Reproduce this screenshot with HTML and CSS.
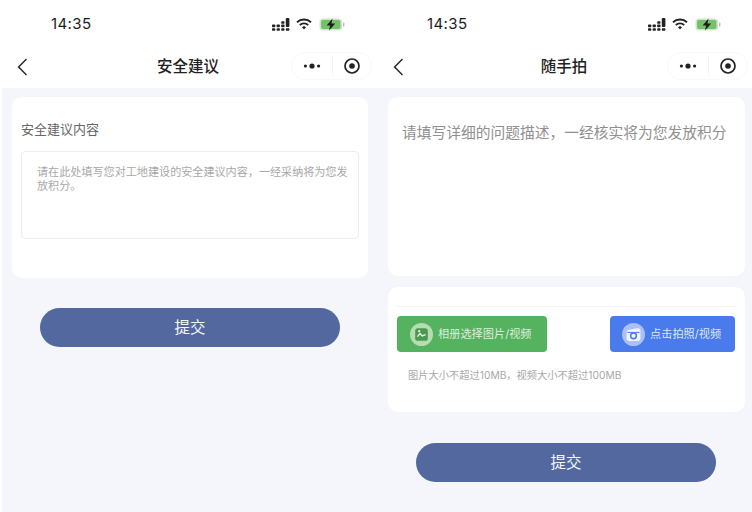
FILE: index.html
```html
<!DOCTYPE html>
<html lang="zh">
<head>
<meta charset="utf-8">
<title>安全建议 / 随手拍</title>
<link rel="stylesheet" href="styles.css">
</head>
<body>
<div class="screens">
  <section class="phone phone-left">
    <div class="statusbar">
      <span class="time">14:35</span>
      <span class="status-icons">
        <svg class="ico-signal" width="19" height="13" viewBox="0 0 19 13"><g fill="#222"><rect x="0" y="6.6" width="3.3" height="2.6" rx=".7"/><rect x="0" y="10.2" width="3.3" height="2.6" rx=".7"/><rect x="4.6" y="6.6" width="3.3" height="2.6" rx=".7"/><rect x="4.6" y="10.2" width="3.3" height="2.6" rx=".7"/><rect x="9.2" y="3.2" width="3.3" height="2.6" rx=".7"/><rect x="9.2" y="6.6" width="3.3" height="2.6" rx=".7"/><rect x="9.2" y="10.2" width="3.3" height="2.6" rx=".7"/><rect x="13.8" y="0" width="3.6" height="9" rx="1"/><rect x="13.8" y="10.2" width="3.6" height="2.6" rx=".7"/></g></svg>
        <svg class="ico-wifi" width="16" height="12" viewBox="0 0 16 12"><path d="M1 4.2C5 .6 11 .6 15 4.2" fill="none" stroke="#222" stroke-width="2"/><path d="M3.8 7C6.2 5 9.8 5 12.2 7" fill="none" stroke="#222" stroke-width="2"/><path d="M6 9.2 8 7.9l2 1.3L8 11.4z" fill="#222"/></svg>
        <svg class="ico-batt" width="26" height="13" viewBox="0 0 26 13"><rect x=".5" y=".5" width="22.5" height="12" rx="3.5" fill="#cfe6ca"/><rect x="2" y="2" width="19.5" height="9" rx="2" fill="#74c06b"/><rect x="24" y="4.5" width="1.4" height="4" rx=".7" fill="#bbb"/><path d="M13.6 .6 7.6 7.4h3.6l-1.2 5 6.2-7h-3.8z" fill="#1c1c1c"/></svg>
      </span>
    </div>
    <div class="navbar">
      <svg class="back" width="11" height="18" viewBox="0 0 11 18"><path d="M9.5 1 1.6 9l7.9 8" fill="none" stroke="#222" stroke-width="1.4"/></svg>
      <h1 class="nav-title">安全建议</h1>
      <div class="capsule">
        <svg width="18" height="8" viewBox="0 0 18 8"><circle cx="2.4" cy="4" r="1.6" fill="#222"/><circle cx="9" cy="4" r="2.6" fill="#222"/><circle cx="15.6" cy="4" r="1.6" fill="#222"/></svg>
        <span class="capsule-line"></span>
        <svg width="18" height="18" viewBox="0 0 18 18"><circle cx="9" cy="9" r="7" fill="none" stroke="#222" stroke-width="1.7"/><circle cx="9" cy="9" r="2.8" fill="#222"/></svg>
      </div>
    </div>
    <main class="content content-left">
      <div class="card card-advice">
        <div class="field-label">安全建议内容</div>
        <div class="textarea">请在此处填写您对工地建设的安全建议内容，一经采纳将为您发放积分。</div>
      </div>
      <button class="submit submit-left">提交</button>
    </main>
  </section>

  <section class="phone phone-right">
    <div class="statusbar">
      <span class="time">14:35</span>
      <span class="status-icons">
        <svg class="ico-signal" width="19" height="13" viewBox="0 0 19 13"><g fill="#222"><rect x="0" y="6.6" width="3.3" height="2.6" rx=".7"/><rect x="0" y="10.2" width="3.3" height="2.6" rx=".7"/><rect x="4.6" y="6.6" width="3.3" height="2.6" rx=".7"/><rect x="4.6" y="10.2" width="3.3" height="2.6" rx=".7"/><rect x="9.2" y="3.2" width="3.3" height="2.6" rx=".7"/><rect x="9.2" y="6.6" width="3.3" height="2.6" rx=".7"/><rect x="9.2" y="10.2" width="3.3" height="2.6" rx=".7"/><rect x="13.8" y="0" width="3.6" height="9" rx="1"/><rect x="13.8" y="10.2" width="3.6" height="2.6" rx=".7"/></g></svg>
        <svg class="ico-wifi" width="16" height="12" viewBox="0 0 16 12"><path d="M1 4.2C5 .6 11 .6 15 4.2" fill="none" stroke="#222" stroke-width="2"/><path d="M3.8 7C6.2 5 9.8 5 12.2 7" fill="none" stroke="#222" stroke-width="2"/><path d="M6 9.2 8 7.9l2 1.3L8 11.4z" fill="#222"/></svg>
        <svg class="ico-batt" width="26" height="13" viewBox="0 0 26 13"><rect x=".5" y=".5" width="22.5" height="12" rx="3.5" fill="#cfe6ca"/><rect x="2" y="2" width="19.5" height="9" rx="2" fill="#74c06b"/><rect x="24" y="4.5" width="1.4" height="4" rx=".7" fill="#bbb"/><path d="M13.6 .6 7.6 7.4h3.6l-1.2 5 6.2-7h-3.8z" fill="#1c1c1c"/></svg>
      </span>
    </div>
    <div class="navbar">
      <svg class="back" width="11" height="18" viewBox="0 0 11 18"><path d="M9.5 1 1.6 9l7.9 8" fill="none" stroke="#222" stroke-width="1.4"/></svg>
      <h1 class="nav-title">随手拍</h1>
      <div class="capsule">
        <svg width="18" height="8" viewBox="0 0 18 8"><circle cx="2.4" cy="4" r="1.6" fill="#222"/><circle cx="9" cy="4" r="2.6" fill="#222"/><circle cx="15.6" cy="4" r="1.6" fill="#222"/></svg>
        <span class="capsule-line"></span>
        <svg width="18" height="18" viewBox="0 0 18 18"><circle cx="9" cy="9" r="7" fill="none" stroke="#222" stroke-width="1.7"/><circle cx="9" cy="9" r="2.8" fill="#222"/></svg>
      </div>
    </div>
    <main class="content content-right">
      <div class="card card-desc">请填写详细的问题描述，一经核实将为您发放积分</div>
      <div class="card card-media">
        <div class="media-rule"></div>
        <div class="media-buttons">
          <div class="media-btn btn-album">
            <span class="media-ico">
              <svg width="23" height="23" viewBox="0 0 23 23"><circle cx="11.5" cy="11.5" r="11.5" fill="#b5dcb3"/><rect x="5.2" y="5.2" width="12.6" height="12.6" rx="2.6" fill="#4a994d"/><path d="M7.4 13.6 10 10.6l2.2 2.4 3.4-1.4" fill="none" stroke="#eef7ed" stroke-width="1.4"/><circle cx="9.2" cy="8.2" r="1.1" fill="#eef7ed"/></svg>
            </span>
            <span>相册选择图片/视频</span>
          </div>
          <div class="media-btn btn-camera">
            <span class="media-ico">
              <svg width="23" height="23" viewBox="0 0 23 23"><circle cx="11.5" cy="11.5" r="11.5" fill="#a9c1f5"/><path d="M4.6 9.2c0-1.2.9-2.1 2-2.3l8.8-1.7c1.6-.3 3 .9 3 2.4v8c0 1.4-1.1 2.5-2.5 2.5H7.1c-1.4 0-2.5-1.1-2.5-2.5z" fill="#f2f5fd"/><path d="M5.4 9.4h12.2" stroke="#4a7bec" stroke-width="1"/><circle cx="11.5" cy="12.8" r="2.9" fill="none" stroke="#4a7bec" stroke-width="1.5"/></svg>
            </span>
            <span>点击拍照/视频</span>
          </div>
        </div>
        <div class="media-hint">图片大小不超过10MB，视频大小不超过100MB</div>
      </div>
      <button class="submit submit-right">提交</button>
    </main>
  </section>
</div>
</body>
</html>
```

FILE: styles.css
```css
* { box-sizing: border-box; }
html, body { margin: 0; padding: 0; background: #fff; }
body {
  width: 752px;
  height: 512px;
  overflow: hidden;
  font-family: "Inter", "Noto Sans CJK SC", "Liberation Sans", sans-serif;
  color: #222;
}
.screens { display: flex; width: 752px; height: 512px; }
.phone { width: 376px; height: 512px; display: flex; flex-direction: column; }
.statusbar {
  height: 48px;
  padding: 14px 31px 0 51px;
  display: flex;
  justify-content: space-between;
  align-items: flex-start;
}
.time { font-size: 15px; line-height: 20px; font-weight: 400; color: #1c1c1c; letter-spacing: .4px; }
.status-icons { display: flex; align-items: center; gap: 5px; height: 20px; }
.ico-batt { margin-left: 2px; }
.navbar {
  height: 40px;
  display: flex;
  align-items: center;
  justify-content: center;
  position: relative;
}
.back { position: absolute; left: 17px; top: 10px; }
.nav-title { margin: 0; font-size: 15.5px; line-height: 20px; font-weight: 500; color: #222; position: relative; top: -1px; }
.capsule {
  position: absolute;
  right: 4px;
  top: 4px;
  width: 81px;
  height: 28px;
  border: 1px solid #f8f8fa;
  border-radius: 14px;
  display: flex;
  align-items: center;
  padding: 0 10px 0 11px;
  justify-content: space-between;
}
.capsule-line { width: 1px; height: 20px; background: #f4f4f6; }
.content { flex: 1; background: #f5f6fb; display: flex; flex-direction: column; }
.content-left { margin-left: 2px; padding: 9px 8px 0 10px; }
.content-right { padding: 9px 7px 0 12px; }
.card { background: #fff; border-radius: 10px; }
.card-advice { height: 181px; padding: 23px 9px 0 9px; }
.field-label { font-size: 13px; line-height: 18px; color: #666; }
.textarea {
  margin-top: 13px;
  height: 88px;
  border: 1px solid #ebecef;
  border-radius: 4px;
  padding: 13px 9px 0 15px;
  font-size: 11.1px;
  line-height: 14px;
  color: #a8a8a8;
}
.submit {
  display: block;
  width: 300px;
  height: 39px;
  border: 0;
  border-radius: 20px;
  background: #52689f;
  color: #f4f5f8;
  font: 400 15.5px/39px "Inter", "Noto Sans CJK SC", sans-serif;
  padding: 0;
}
.submit-left { margin: 30px 0 0 28px; }
.submit-right { margin: 31px 0 0 28px; }
.card-desc {
  height: 179px;
  padding: 26px 0 0 14px;
  font-size: 14.75px;
  line-height: 20px;
  color: #8f8f8f;
  white-space: nowrap;
}
.card-media { margin-top: 11px; height: 125px; padding: 19px 10px 0 9px; }
.media-rule { height: 1px; background: #f3f3f5; }
.media-buttons { margin-top: 9px; display: flex; justify-content: space-between; }
.media-btn {
  height: 36px;
  border-radius: 4px;
  display: flex;
  align-items: center;
  color: #dfeedd;
  font-size: 11.2px;
  line-height: 14px;
}
.btn-album { width: 150px; background: #55b25f; padding-left: 13px; gap: 5px; }
.btn-camera { width: 125px; background: #4a7bec; padding-left: 12px; gap: 5px; color: #dde6fa; }
.media-ico { display: flex; width: 23px; height: 23px; }
.media-hint { margin-top: 16px; padding-left: 11px; font-size: 10.25px; line-height: 14px; color: #a8a8a8; }
```
